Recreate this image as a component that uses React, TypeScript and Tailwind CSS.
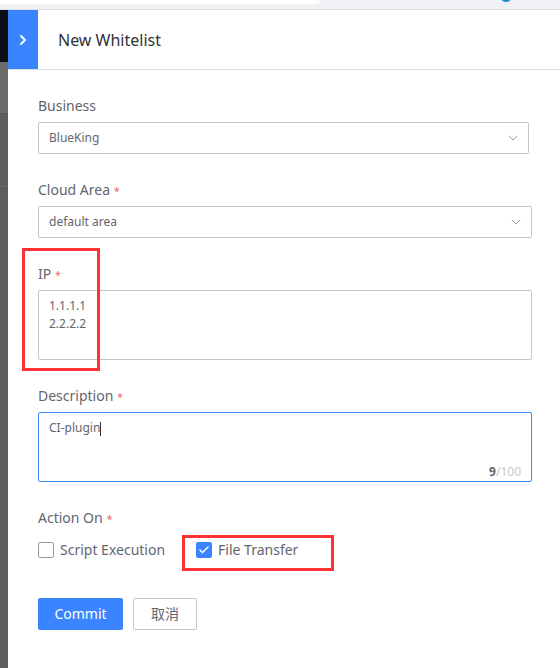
import { ChevronDown, ChevronRight, Check } from "lucide-react";

const font = { fontFamily: '"Noto Sans", "Noto Sans CJK SC", sans-serif' };

const Label: React.FC<{ text: string; required?: boolean }> = ({ text, required }) => (
  <div className="h-8 flex items-center text-sm text-[#63656e]">
    {text}
    {required && <span className="ml-[4px] mt-[2px] text-[#ea3636] text-[10px] opacity-80">*</span>}
  </div>
);

const Select: React.FC<{ value: string; wide?: boolean }> = ({ value, wide }) => (
  <div
    className={`h-8 flex items-center justify-between border border-[#c4c6cc] rounded-[2px] pl-[10px] pr-[7px] text-xs text-[#63656e] ${
      wide ? "w-[494px]" : "w-[491px]"
    }`}
  >
    <span>{value}</span>
    <ChevronDown size={16} strokeWidth={1.5} className="text-[#979ba5]" />
  </div>
);

export default function App() {
  return (
    <div className="w-[560px] h-[668px] bg-white overflow-hidden flex flex-col" style={font}>
      {/* top bar */}
      <div className="h-[10px] shrink-0 bg-[#f0f1f5] border-b border-[#dcdee5] flex items-start">
        <div className="w-[320px] h-[4px] bg-white rounded-br-[6px]" />
        <div className="ml-[180px] -mt-[10px] w-[12px] h-[12px] rounded-full bg-[#1b8ad8]" />
      </div>

      <div className="flex flex-1">
        {/* left strip */}
        <div className="w-[8px] shrink-0 flex flex-col bg-[#5e5e5e]">
          <div className="h-[52px] bg-[#0c0e15]" />
          <div className="h-[52px] bg-[#6b6b6b] border-b border-[#555]" />
          <div className="h-[73px] border-b border-[#6a6a6a]" />
        </div>

        {/* panel */}
        <div className="flex-1 flex flex-col">
          <div className="h-[60px] border-b border-[#dcdee5] flex items-center">
            <div className="w-[30px] h-full bg-[#3a84ff] flex items-center justify-center">
              <ChevronRight size={16} strokeWidth={3} className="text-white" />
            </div>
            <div className="ml-[20px] text-base text-[#313238]">New Whitelist</div>
          </div>

          <div className="relative pl-[30px] pt-[20px] flex flex-col">
            <Label text="Business" />
            <Select value="BlueKing" />

            <div className="mt-[20px]">
              <Label text="Cloud Area" required />
              <Select value="default area" wide />
            </div>

            <div className="mt-[20px]">
              <Label text="IP" required />
              <div className="w-[494px] h-[70px] border border-[#c4c6cc] rounded-[2px] px-[10px] py-[6px] text-xs leading-[18px] text-[#63656e]">
                <div>1.1.1.1</div>
                <div>2.2.2.2</div>
              </div>
            </div>

            <div className="mt-[20px]">
              <Label text="Description" required />
              <div className="relative w-[494px] h-[70px] border border-[#3a84ff] rounded-[2px] px-[10px] py-[6px] text-xs leading-[18px] text-[#63656e]">
                <span>CI-plugin</span>
                <span className="inline-block w-px h-[14px] bg-[#313238] align-middle" />
                <div className="absolute right-[10px] bottom-[1px] text-xs text-[#c4c6cc]">
                  <span className="font-bold text-[#63656e]">9</span>/100
                </div>
              </div>
            </div>

            <div className="mt-[20px]">
              <Label text="Action On" required />
              <div className="h-8 flex items-center text-sm text-[#63656e]">
                <div className="w-4 h-4 border border-[#979ba5] rounded-[2px] bg-white" />
                <span className="ml-[6px]">Script Execution</span>
                <div className="ml-[31px] w-4 h-4 rounded-[2px] bg-[#3a84ff] flex items-center justify-center">
                  <Check size={12} strokeWidth={3} className="text-white" />
                </div>
                <span className="ml-[6px]">File Transfer</span>
              </div>
            </div>

            <div className="mt-[32px] flex gap-[10px]">
              <button className="w-[85px] h-8 bg-[#3a84ff] text-white text-sm rounded-[2px]">Commit</button>
              <button className="w-[64px] h-8 border border-[#c4c6cc] text-[#63656e] text-sm rounded-[2px] bg-white">
                取消
              </button>
            </div>

            {/* annotation boxes */}
            <div className="absolute left-[14px] top-[178px] w-[78px] h-[123px] border-[3px] border-[#ff3333]" />
            <div className="absolute left-[174px] top-[465px] w-[152px] h-[36px] border-[3px] border-[#ff3333]" />
          </div>
        </div>
      </div>
    </div>
  );
}
